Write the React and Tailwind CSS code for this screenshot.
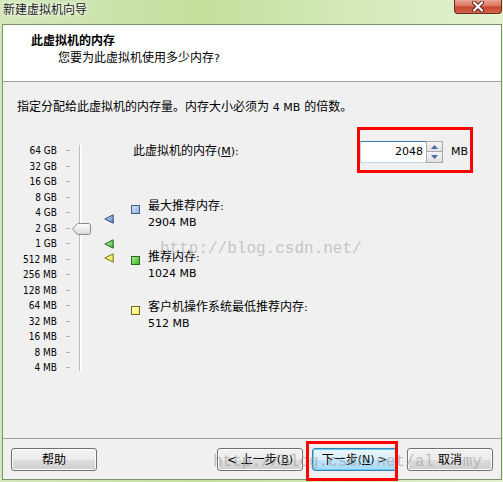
import React from "react";

const labels = ["64 GB","32 GB","16 GB","8 GB","4 GB","2 GB","1 GB","512 MB","256 MB","128 MB","64 MB","32 MB","16 MB","8 MB","4 MB"];

function Tri({ fill, stroke, light }) {
  return (
    <svg width="10" height="10" viewBox="0 0 10 10">
      <defs>
        <linearGradient id={"g" + fill.slice(1)} x1="0" y1="0" x2="1" y2="1">
          <stop offset="0" stopColor={light} />
          <stop offset="1" stopColor={fill} />
        </linearGradient>
      </defs>
      <polygon points="0.8,5 9.2,0.8 9.2,9.2" fill={"url(#g" + fill.slice(1) + ")"} stroke={stroke} strokeWidth="1" strokeLinejoin="round" />
    </svg>
  );
}

function Btn({ children, focus }) {
  return (
    <div
      className={
        "h-[23px] rounded-[3px] border flex items-center justify-center text-[12px] leading-none text-black " +
        (focus
          ? "border-[#3c7fb1] shadow-[inset_0_0_0_1px_#62d0f5] bg-[linear-gradient(#eaf6fd_0%,#d9f0fc_50%,#bee6fd_51%,#a7d9f5_100%)]"
          : "border-[#707070] shadow-[inset_0_0_0_1px_#fcfcfc] bg-[linear-gradient(#f2f2f2_0%,#ebebeb_50%,#dddddd_51%,#cfcfcf_100%)]")
      }
    >
      {children}
    </div>
  );
}

function Square({ bg, border }) {
  return <div className={"w-[9px] h-[9px] mt-[7px] shrink-0 border " + bg + " " + border} />;
}

export default function App() {
  return (
    <div className="relative w-[503px] h-[482px] overflow-hidden font-['DejaVu_Sans','Noto_Sans_CJK_SC',sans-serif] text-[12px] text-black bg-[linear-gradient(90deg,#d3e7bb_0%,#c3df9c_40%,#d6ebbd_75%,#e2f1cf_100%)] pl-[2px] pr-[1px]">
      {/* title bar */}
      <div className="h-[24px] flex items-start justify-between">
        <div className="pl-[1px] pt-[2px] leading-[16px] text-[12px] text-[#1a1a1a] [text-shadow:0_0_6px_#ffffff,0_0_3px_#ffffff]">新建虚拟机向导</div>
        <div className="w-[48px] h-[14px] rounded-b-[4px] border border-t-0 border-[#6e2a1e] bg-[linear-gradient(#eaa593_0%,#d9745e_45%,#c5472f_55%,#d5654a_100%)] flex items-center justify-center">
          <svg width="14" height="11" viewBox="0 0 14 11">
            <path d="M3 1.5 L11 9.5 M11 1.5 L3 9.5" stroke="#5a2418" strokeWidth="4" strokeLinecap="round" />
            <path d="M3 1.5 L11 9.5 M11 1.5 L3 9.5" stroke="#ffffff" strokeWidth="2.2" strokeLinecap="round" />
          </svg>
        </div>
      </div>

      {/* content */}
      <div className="border border-[#7b9368] flex flex-col">
        {/* header */}
        <div className="h-[57px] bg-white border-b border-[#a0a0a0] pt-[8px] pl-[28px]">
          <div className="font-bold leading-[16px]">此虚拟机的内存</div>
          <div className="mt-[1px] pl-[27px] leading-[16px]">
            您要为此虚拟机使用多少内存<span className="text-[11px]">?</span>
          </div>
        </div>

        {/* body */}
        <div className="h-[357px] bg-[#f0f0f0] border-b border-[#a0a0a0] pt-[17px]">
          <div className="pl-[14px] leading-[16px]">
            指定分配给此虚拟机的内存量。内存大小必须为 <span className="text-[11px]">4 MB</span> 的倍数。
          </div>

          <div className="mt-[25px] flex">
            {/* slider */}
            <div className="relative w-[128px] shrink-0 flex items-start">
              <div className="pt-[2px] flex flex-col">
                {labels.map((l) => (
                  <div key={l} className="h-[15.5px] flex items-center">
                    <span className="w-[54px] text-right text-[10px] leading-[15.5px] font-['DejaVu_Sans_Condensed','DejaVu_Sans',sans-serif]">{l}</span>
                    <span className="ml-[9px] w-[4px] h-px bg-[#b4b4b4]" />
                  </div>
                ))}
              </div>
              <div className="ml-[9px] mt-[4px] h-[226px] w-[3px] border-l border-[#bdbdbd] border-r-2 border-r-white" />
              <div className="absolute left-[69px] top-[82px]">
                <svg width="19" height="12" viewBox="0 0 19 12">
                  <defs>
                    <linearGradient id="th" x1="0" y1="0" x2="0" y2="1">
                      <stop offset="0" stopColor="#ffffff" />
                      <stop offset="1" stopColor="#d8d8d8" />
                    </linearGradient>
                  </defs>
                  <path d="M0.5 6 L5 1 Q5.5 0.5 6.5 0.5 L16.5 0.5 Q18.5 0.5 18.5 2.5 L18.5 9.5 Q18.5 11.5 16.5 11.5 L6.5 11.5 Q5.5 11.5 5 11 Z" fill="url(#th)" stroke="#8a8a8a" strokeWidth="1" />
                </svg>
              </div>
              <div className="absolute left-[101px] top-[73px]">
                <Tri fill="#5a7fc0" light="#dbe6f7" stroke="#2c4a85" />
              </div>
              <div className="absolute left-[101px] top-[98px]">
                <Tri fill="#38b030" light="#d8f5d0" stroke="#1f6e18" />
              </div>
              <div className="absolute left-[101px] top-[112px]">
                <Tri fill="#e8e020" light="#ffffe0" stroke="#7a7410" />
              </div>
            </div>

            {/* right column */}
            <div className="flex-1 flex flex-col">
              <div className="h-[22px] flex items-center">
                <span className="pl-[2px] leading-[16px] mt-[-1px]">
                  此虚拟机的内存<span className="text-[11px]">(<span className="underline">M</span>):</span>
                </span>
                <div className="flex-1" />
                <div className="w-[66px] h-[22px] bg-white border-t border-t-[#3d7bad] border-b border-b-[#b7d9ed] border-l border-l-[#b5cfe7] flex items-center justify-end pr-[3px] text-[11px]">
                  2048
                </div>
                <div className="w-[17px] h-[22px] flex flex-col">
                  <div className="h-[11px] border border-[#a7a7a7] bg-[linear-gradient(#f6f6f6,#e0e0e0)] flex items-center justify-center">
                    <svg width="7" height="4" viewBox="0 0 7 4"><polygon points="3.5,0 7,4 0,4" fill="#4d6aa8" /></svg>
                  </div>
                  <div className="h-[11px] border border-t-0 border-[#a7a7a7] bg-[linear-gradient(#f6f6f6,#e0e0e0)] flex items-center justify-center">
                    <svg width="7" height="4" viewBox="0 0 7 4"><polygon points="0,0 7,0 3.5,4" fill="#4d6aa8" /></svg>
                  </div>
                </div>
                <span className="ml-[8px] mr-[33px] text-[11px]">MB</span>
              </div>

              <div className="mt-[35px] flex">
                <Square bg="bg-[linear-gradient(135deg,#d4e0f4,#94b0dc)]" border="border-[#3e5f94]" />
                <div className="ml-[8px] leading-[16px]">
                  <div>最大推荐内存<span className="text-[11px]">:</span></div>
                  <div className="text-[11px]">2904 MB</div>
                </div>
              </div>
              <div className="mt-[18px] flex">
                <Square bg="bg-[linear-gradient(135deg,#a6ec8c,#3fb52c)]" border="border-[#246b1c]" />
                <div className="ml-[8px] leading-[16px]">
                  <div>推荐内存<span className="text-[11px]">:</span></div>
                  <div className="text-[11px]">1024 MB</div>
                </div>
              </div>
              <div className="mt-[17px] flex">
                <Square bg="bg-[linear-gradient(135deg,#ffffc8,#f4f060)]" border="border-[#6e6a18]" />
                <div className="ml-[8px] leading-[16px]">
                  <div>客户机操作系统最低推荐内存<span className="text-[11px]">:</span></div>
                  <div className="text-[11px]">512 MB</div>
                </div>
              </div>
            </div>
          </div>
        </div>

        {/* footer */}
        <div className="h-[40px] bg-[#f0f0f0] pt-[9px] flex items-start">
          <div className="ml-[8px] w-[86px]"><Btn>帮助</Btn></div>
          <div className="flex-1" />
          <div className="w-[86px]"><Btn>&lt; 上一步<span className="text-[11px]">(<span className="underline">B</span>)</span></Btn></div>
          <div className="ml-[9px] w-[85px]"><Btn focus>下一步<span className="text-[11px]">(<span className="underline">N</span>) &gt;</span></Btn></div>
          <div className="ml-[10px] mr-[8px] w-[86px]"><Btn>取消</Btn></div>
        </div>
      </div>

      {/* watermarks */}
      <div className="absolute left-[160px] top-[239px] font-['Liberation_Mono',monospace] text-[16px] leading-[20px] text-[#c6c6c6] pointer-events-none whitespace-pre">
        http://blog.csdn.net/
      </div>
      <div className="absolute left-[213px] top-[452px] font-['Liberation_Mono',monospace] text-[16px] leading-[20px] text-[#9c9c9c]/60 pointer-events-none whitespace-pre">
        http://blog.csdn.net/al   my
      </div>

      {/* red highlight boxes */}
      <div className="absolute left-[357px] top-[127px] w-[116px] h-[46px] border-[3px] border-[#ff0000] pointer-events-none" />
      <div className="absolute left-[306px] top-[441px] w-[92px] h-[40px] border-[3px] border-[#ff0000] pointer-events-none" />
    </div>
  );
}
